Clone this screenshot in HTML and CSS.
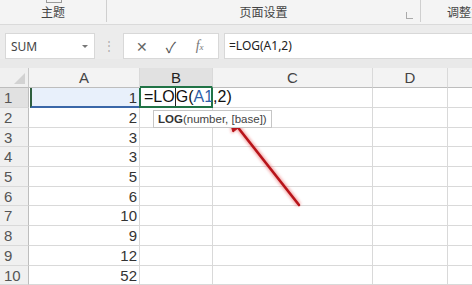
FILE: index.html
```html
<!DOCTYPE html>
<html>
<head>
    <title>LOG</title>
    <link rel="stylesheet" href="styles.css">
</head>
<body>
    <div class="ribbon">
        <div class="group g-theme">
            <span class="icon-stub"></span>
            <span class="group-label">主题</span>
        </div>
        <div class="group g-page">
            <span class="group-label">页面设置</span>
            <span class="launcher"></span>
        </div>
        <div class="group g-fit">
            <span class="group-label">调整为</span>
        </div>
    </div>
    <div class="band"></div>

    <div class="formula-bar">
        <div class="name-box">
            <span>SUM</span>
            <span class="caret"></span>
        </div>
        <div class="dots">⋮</div>
        <div class="fx-box">
            <span class="fx-btn">✕</span>
            <span class="fx-btn check">✓</span>
            <span class="fx-btn fx"><i>f</i><small>x</small></span>
        </div>
        <div class="formula-input">=LOG(A1,2)</div>
    </div>

    <div class="sheet">
        <div class="grid">
            <div class="corner"><span class="tri"></span></div>
            <div class="col-head">A</div>
            <div class="col-head active">B</div>
            <div class="col-head">C</div>
            <div class="col-head">D</div>
            <div class="col-head last"></div>

            <div class="row-head active">1</div>
            <div class="cell num ref">1</div>
            <div class="cell edit">=LO<span class="cursor"></span>G(<span class="blue">A1</span>,2)</div>
            <div class="cell"></div>
            <div class="cell"></div>
            <div class="cell last"></div>
        </div>
        <div class="grid" id="rows"></div>

        <div class="tooltip"><b>LOG</b>(number, [base])</div>

        <svg class="arrow" width="472" height="285" viewBox="0 0 472 285">
            <defs>
                <filter id="glow" x="-20%" y="-20%" width="140%" height="140%">
                    <feGaussianBlur stdDeviation="1.4"/>
                </filter>
            </defs>
            <g stroke="#e86060" fill="#e86060" opacity="0.55" filter="url(#glow)">
                <line x1="299" y1="205" x2="236" y2="125" stroke-width="5"/>
                <polygon points="228,115 244,124 232,133"/>
            </g>
            <g stroke="#b8141a" fill="#b8141a">
                <line x1="299" y1="205" x2="236" y2="125" stroke-width="2.6" stroke-linecap="round"/>
                <polygon points="228,115 243,124 233,132"/>
            </g>
        </svg>
    </div>

    <script>
        // filas 2 a 10 con sus valores
        var valores = [2, 3, 3, 5, 6, 10, 9, 12, 52];
        var rows = document.getElementById("rows");
        valores.forEach(function (v, i) {
            var html = '<div class="row-head">' + (i + 2) + '</div>';
            html += '<div class="cell num">' + v + '</div>';
            html += '<div class="cell"></div><div class="cell"></div><div class="cell"></div><div class="cell last"></div>';
            rows.insertAdjacentHTML("beforeend", html);
        });
    </script>
</body>
</html>
```

FILE: styles.css
```css
body {
    margin: 0;
    width: 472px;
    height: 285px;
    overflow: hidden;
    background-color: #e9e9e9;
    font-family: "Noto Sans", "Noto Sans CJK SC", sans-serif;
    color: #333;
}

/* Cinta superior */
.ribbon {
    height: 24px;
    background-color: #f4f4f4;
    border-bottom: 1px solid #dadada;
    display: flex;
    overflow: hidden;
}

.group {
    position: relative;
    display: flex;
    align-items: flex-end;
    justify-content: center;
    border-right: 1px solid #cfcfcf;
    padding-bottom: 3px;
    box-sizing: border-box;
    height: 22px;
    white-space: nowrap;
}

.g-theme { width: 107px; }
.g-page { width: 314px; }
.g-fit { flex: 1; border-right: none; justify-content: flex-start; padding-left: 26px; overflow: hidden; }

.group-label {
    font-family: "Noto Sans CJK SC", sans-serif;
    font-size: 12px;
    line-height: 14px;
    color: #444;
}

.icon-stub {
    position: absolute;
    top: 0;
    left: 46px;
    width: 14px;
    height: 2px;
    border: 1px solid #9a9a9a;
    border-top: none;
}

.launcher {
    position: absolute;
    right: 7px;
    bottom: 3px;
    width: 6px;
    height: 6px;
    border-left: 1px solid #aaa;
    border-bottom: 1px solid #aaa;
}

.band {
    height: 8px;
    background-color: #ececec;
}

/* Barra de fórmulas */
.formula-bar {
    height: 26px;
    display: flex;
    align-items: stretch;
    padding-left: 5px;
    background-color: #ececec;
}

.name-box {
    width: 90px;
    box-sizing: border-box;
    background-color: #fff;
    border: 1px solid #d8d8d8;
    display: flex;
    align-items: center;
    justify-content: space-between;
    padding: 0 6px 0 5px;
    font-size: 12px;
    color: #444;
}

.caret {
    width: 0;
    height: 0;
    border-left: 3px solid transparent;
    border-right: 3px solid transparent;
    border-top: 3px solid #777;
}

.dots {
    width: 28px;
    text-align: center;
    color: #b0b0b0;
    font-size: 12px;
    line-height: 26px;
}

.fx-box {
    width: 96px;
    box-sizing: border-box;
    background-color: #fff;
    border: 1px solid #d8d8d8;
    display: flex;
    align-items: center;
    justify-content: space-around;
    padding: 0 4px;
}

.fx-btn {
    font-size: 14px;
    color: #666;
    width: 24px;
    text-align: center;
}

.fx-btn.check { color: #555; font-size: 15px; }

.fx {
    font-family: "Liberation Serif", serif;
    font-size: 14px;
    color: #777;
}

.fx small { font-size: 9px; font-style: italic; }

.formula-input {
    flex: 1;
    margin-left: 5px;
    background-color: #fff;
    border: 1px solid #d8d8d8;
    border-right: none;
    font-size: 12px;
    line-height: 24px;
    padding-left: 4px;
    color: #222;
}

/* Hoja */
.sheet {
    position: relative;
    margin-top: 9px;
    background-color: #fff;
}

.sheet .arrow {
    position: absolute;
    left: 0;
    top: -68px;
}

.grid {
    display: grid;
    grid-template-columns: 29px 111px 73px 160px 75px 1fr;
}

.grid:first-child {
    grid-template-rows: 20px 20px;
}

#rows {
    grid-auto-rows: 19.7px;
}

.corner, .col-head, .row-head, .cell {
    box-sizing: border-box;
    border-right: 1px solid #d9d9d9;
    border-bottom: 1px solid #d9d9d9;
    font-family: "Liberation Sans", sans-serif;
}

.corner {
    position: relative;
    background-color: #f0f0f0;
    border-right-color: #c8c8c8;
    border-bottom-color: #bdbdbd;
}

.tri {
    position: absolute;
    right: 3px;
    bottom: 3px;
    width: 0;
    height: 0;
    border-left: 11px solid transparent;
    border-bottom: 11px solid #d2d2d2;
}

.col-head {
    background-color: #f3f3f3;
    border-bottom-color: #bdbdbd;
    text-align: center;
    font-size: 15px;
    line-height: 19px;
    color: #444;
}

.col-head.active {
    background-color: #e1e1e1;
    border-bottom: 2px solid #217346;
    color: #222;
}

.row-head {
    background-color: #f0f0f0;
    border-right-color: #bdbdbd;
    padding-left: 4px;
    font-size: 15px;
    line-height: 19px;
    color: #555;
}

.row-head.active {
    background-color: #e1e1e1;
}

.cell.last, .col-head.last { border-right: none; }

.num {
    text-align: right;
    padding-right: 2px;
    font-size: 15px;
    line-height: 19px;
    color: #333;
}

.ref {
    background-color: #e8f0fb;
    border-left: 2px solid #2e5f3e;
    border-bottom: 2px solid #3a67a8;
    margin-left: 1px;
}

.edit {
    position: relative;
    z-index: 1;
    white-space: nowrap;
    overflow: visible;
    border: 2px solid #217346;
    border-top: none;
    margin-left: -1px;
    padding-left: 3px;
    font-size: 16px;
    line-height: 18px;
    color: #111;
}

.edit .blue { color: #2f5fa8; }

.cursor {
    display: inline-block;
    width: 1px;
    height: 18px;
    background-color: #222;
    vertical-align: top;
}

/* Ayuda de la función */
.tooltip {
    position: absolute;
    left: 153px;
    top: 42px;
    z-index: 2;
    background-color: #fff;
    border: 1px solid #c6c6c6;
    padding: 0 4px;
    font-family: "Liberation Sans", sans-serif;
    font-size: 11.5px;
    line-height: 16px;
    color: #444;
    white-space: nowrap;
}

.tooltip b { color: #333; }
```
